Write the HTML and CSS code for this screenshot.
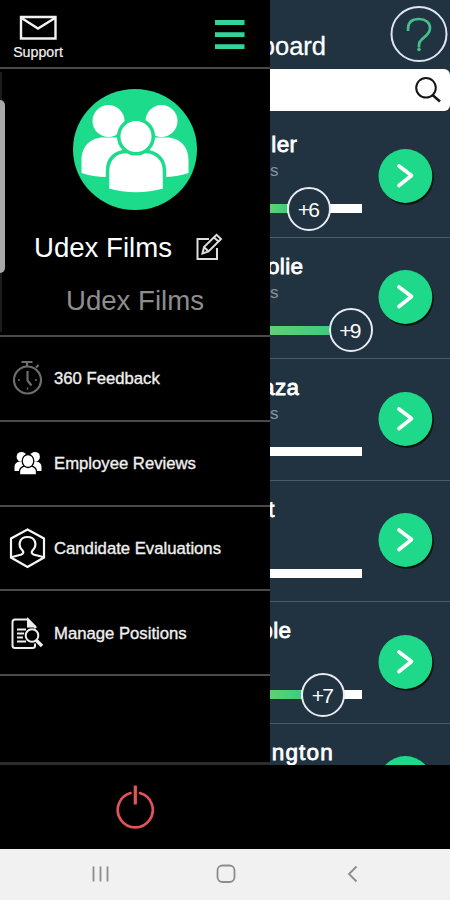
FILE: index.html
```html
<!DOCTYPE html>
<html lang="en">
<head>
<meta charset="utf-8">
<title>Udex Films</title>
<link rel="stylesheet" href="styles.css">
</head>
<body>
<svg class="defs" width="0" height="0">
  <symbol id="go" viewBox="0 0 56 56">
    <circle cx="28.8" cy="28.8" r="26.9" fill="#07120f"/>
    <circle cx="27.4" cy="27" r="26.9" fill="#1fd98b"/>
    <path d="M21 17L33.500 26.500L21 36.500" fill="none" stroke="#fff" stroke-width="3.700" stroke-linecap="round" stroke-linejoin="round"/>
  </symbol>
</svg>
<div class="screen">
  <div class="main">
    <aside class="drawer">
      <div class="top">
        <div class="support">
          <svg width="38" height="25" viewBox="0 0 38 25" fill="none" stroke="#f2f2f2" stroke-width="2.400"><path d="M2 2H36.500V23.500H2ZM2.500 3L19 13.500L36 3"/></svg>
          <span>Support</span>
        </div>
        <svg class="burger" width="30" height="30" viewBox="0 0 30 30" fill="#34d39a"><path d="M0 0H29.500V5H0ZM0 12.200H29.500V17H0ZM0 24.300H29.500V29H0Z"/></svg>
      </div>
      <div class="profile">
        <div class="thumb"></div>
        <svg class="avatar" width="124" height="121" viewBox="0 0 124 121">
          <ellipse cx="62" cy="60.500" rx="62" ry="60.500" fill="#1cdb8a"/>
          <g fill="#fff">
            <circle cx="35.500" cy="32" r="16"/><circle cx="88.500" cy="32" r="16"/>
            <path d="M8.500 84V71C8.500 57 18 48.500 30 48.500H42C54 48.500 62 58 62 70V88H34Q20 88 8.500 84ZM115.500 84V71C115.500 57 106 48.500 94 48.500H82C70 48.500 62 58 62 70V88H90Q104 88 115.500 84Z"/>
          </g>
          <g fill="#fff" stroke="#1cdb8a" stroke-width="3.500">
            <path d="M34.500 101V82C34.500 69 43 62.500 54 62.500H72C83 62.500 91.500 70 91.500 82V101Q63 109 34.500 101Z"/>
            <circle cx="63" cy="47.500" r="17.300"/>
          </g>
        </svg>
        <div class="org">Udex Films
          <svg class="edit" width="27" height="28" viewBox="0 0 27 28" fill="none" stroke="#ddd" stroke-width="2"><path d="M13 6H1.500V26H21V15"/><path d="M6.500 20.500L8 14L20.500 1.800L25 6L12.500 18.500ZM8 14L12.500 18.500M18 4.500L22.500 8.500"/></svg>
        </div>
        <div class="sub-org">Udex Films</div>
      </div>
      <div class="item">
        <svg width="34" height="40" viewBox="0 0 34 40" fill="none" stroke="#6d6d6d" stroke-width="2.200"><circle cx="17.500" cy="22" r="13.500"/><path d="M11.500 4H22.500M17 4V8.500M26 9.500L28.500 7M17.500 13V22.500L21.500 27.500"/><path d="M8 22H10M25 22H27M17.500 29.500V31.500" stroke-width="1.500"/></svg>
        <span>360 Feedback</span>
      </div>
      <div class="item">
        <svg width="34" height="40" viewBox="0 0 34 40" fill="#fff"><circle cx="11.500" cy="13.800" r="4.900"/><circle cx="25" cy="13.800" r="4.900"/><path d="M4.500 28V24Q4.500 19 10 18.500H26Q31.500 19 31.500 24V28Z"/><g stroke="#000" stroke-width="1.300"><path d="M9.500 32V28Q10 24 15 23H21Q26 24 26.500 28V32Z"/><ellipse cx="18" cy="18" rx="5.800" ry="6.500"/></g></svg>
        <span>Employee Reviews</span>
      </div>
      <div class="item">
        <svg width="38" height="42" viewBox="0 0 38 42" fill="none" stroke="#f5f5f5" stroke-width="2.200"><path d="M19.500 2.500L36 11.500V30.500L19.500 40L3 30.500V11.500Z"/><path d="M4 30L13.500 27.500Q16.500 26 14.500 23.500C9.500 18.500 11 10 19.500 10S29.500 18.500 24.500 23.500Q22.500 26 25.500 27.500L35 30"/></svg>
        <span>Candidate Evaluations</span>
      </div>
      <div class="item">
        <svg width="34" height="40" viewBox="0 0 34 40" fill="none" stroke="#eee" stroke-width="2"><path d="M25 30.500V33Q25 35 22.500 35H5Q2.500 35 2.500 32.500V9Q2.500 6.500 5 6.500H18L25 13.500V15.500"/><path d="M18 6.500V13.500H25Z" fill="#eee"/><path d="M7 16.500H16M7 20.500H14M7 24.500H13M7 28.500H16"/><circle cx="22" cy="22.500" r="6.300"/><path d="M26.500 27.500L32 33" stroke-width="3.300"/></svg>
        <span>Manage Positions</span>
      </div>
      <div class="item blank"></div>
    </aside>
    <section class="board">
      <header>
        <div class="title"><span>board</span></div>
        <svg class="help" width="58" height="58" viewBox="0 0 58 58" fill="none"><ellipse cx="29" cy="29" rx="27.500" ry="27" stroke="#dfe4f2" stroke-width="2"/><path d="M18 26V24C18 16 23.500 14 29 14C35.500 14 40 17.500 40 23C40 32.500 29 32 29 40V42.500" stroke="#43be8e" stroke-width="2.700"/><circle cx="29" cy="44.500" r="1.800" fill="#43be8e"/></svg>
      </header>
      <div class="search"><svg width="28" height="28" viewBox="0 0 28 28" fill="none" stroke="#151515" stroke-width="2"><circle cx="12" cy="10.800" r="9.800"/><path d="M18.500 18L26 24.500" stroke-width="2.500"/></svg></div>
      <div class="list">
        <div class="row"><div class="info"><b class="name e27">ler</b><i class="unit">s</i><div class="track"><div class="fill" style="width:17px"></div><span class="knob">+6</span></div></div><svg class="go"><use href="#go"/></svg></div>
        <div class="row"><div class="info"><b class="name e33">olie</b><i class="unit">s</i><div class="track full"><div class="fill" style="width:58.5px"></div><span class="knob">+9</span></div></div><svg class="go"><use href="#go"/></svg></div>
        <div class="row"><div class="info"><b class="name e29">aza</b><i class="unit">s</i><div class="track"></div></div><svg class="go"><use href="#go"/></svg></div>
        <div class="row"><div class="info"><b class="name e5">t</b><i class="unit"></i><div class="track"></div></div><svg class="go"><use href="#go"/></svg></div>
        <div class="row"><div class="info"><b class="name e21">ble</b><i class="unit"></i><div class="track"><div class="fill" style="width:31px"></div><span class="knob">+7</span></div></div><svg class="go"><use href="#go"/></svg></div>
        <div class="row"><div class="info"><b class="name e63">ngton</b></div><svg class="go"><use href="#go"/></svg></div>
      </div>
    </section>
  </div>
  <footer>
    <svg width="40" height="46" viewBox="0 0 40 46" fill="none" stroke="#e25459" stroke-width="2.600" stroke-linecap="round"><path d="M15.500 9A17.500 17.500 0 1 0 25 9"/><path d="M20.300 1.500V20.500" stroke-width="3.200" stroke-linecap="butt"/></svg>
  </footer>
  <nav>
    <svg width="17" height="18" viewBox="0 0 17 18" stroke="#8c8c8c" stroke-width="1.800"><path d="M1.500 1.500V16.500M8.500 1.500V16.500M15.500 1.500V16.500"/></svg>
    <svg width="20" height="20" viewBox="0 0 20 20" fill="none" stroke="#8c8c8c" stroke-width="1.800"><rect x="1.500" y="1.500" width="17" height="16.500" rx="5"/></svg>
    <svg width="11" height="18" viewBox="0 0 11 18" fill="none" stroke="#8c8c8c" stroke-width="1.800"><path d="M9.500 1.500L2 9L9.500 16.500"/></svg>
  </nav>
</div>
</body>
</html>
```
FILE: styles.css
```css
* { box-sizing: border-box; }
body { margin: 0; font-family: "Liberation Sans", Arial, sans-serif; color: #fff; background: #000; }
svg { display: block; flex: none; }
.defs { position: absolute; }
.screen { width: 450px; height: 900px; display: grid; grid-template-rows: 765px 84px 51px; overflow: hidden; }
.main { display: grid; grid-template-columns: 270px 180px; min-height: 0; }
.drawer { background: #000; display: flex; flex-direction: column; border-bottom: 3px solid #2c2c2c; }
.top { height: 69px; border-bottom: 2px solid #4a4a4a; display: flex; justify-content: space-between; padding: 15px 25px 0 13px; flex: none; }
.support { display: flex; flex-direction: column; align-items: center; width: 50px; font-size: 14.2px; line-height: 16px; color: #f2f2f2; -webkit-text-stroke: .2px; }
.support span { margin-top: 4px; }
.burger { margin-top: 5px; }
.profile { position: relative; height: 268px; flex: none; border-bottom: 2.500px solid #4a4a4a; padding-top: 20px; display: flex; flex-direction: column; }
.profile::before { content: ""; position: absolute; left: 0; top: 3px; width: 2px; height: 260px; background: #1d1d1d; }
.thumb { position: absolute; left: 0; top: 31px; width: 5px; height: 173px; background: #a9a9a9; border-radius: 0 5px 5px 0; }
.avatar { margin-left: 73px; }
.org { margin: 22px 0 0 34px; height: 32px; font-size: 27.600px; line-height: 32px; display: flex; align-items: center; white-space: nowrap; }
.edit { margin: -3px 0 0 24px; }
.sub-org { margin: 21px 0 0 66px; font-size: 27.600px; line-height: 32px; color: #8d8d8d; }
.item { height: 84.800px; flex: none; border-bottom: 2.500px solid #4a4a4a; display: grid; grid-template-columns: 54px 1fr; align-items: center; font-size: 16.700px; color: #f0f0f0; -webkit-text-stroke: .35px; }
.item span { padding-top: 2px; }
.item svg { justify-self: center; -webkit-text-stroke: 0; }
.item.blank { flex: 1; height: auto; border: 0; }
.board { background: #213340; overflow: hidden; display: flex; flex-direction: column; min-width: 0; }
header { height: 69px; flex: none; display: flex; justify-content: space-between; align-items: flex-start; }
.title { width: 56px; display: flex; justify-content: flex-end; padding-top: 31px; font-size: 25.500px; line-height: 30px; -webkit-text-stroke: .3px; clip-path: inset(0); }
.help { margin: 5px 2px 0 0; }
.search { height: 42px; flex: none; background: #fff; border-radius: 0 6px 6px 0; display: flex; justify-content: flex-end; padding: 8px 8px 0 0; }
.list { padding-top: 5px; }
.row { height: 121.600px; border-bottom: 1.500px solid #495c69; display: flex; align-items: flex-start; }
.info { width: 92px; flex: none; display: flex; flex-direction: column; }
.name { display: flex; justify-content: flex-end; padding-top: 16px; font-size: 22.500px; line-height: 26px; font-weight: 400; letter-spacing: .4px; -webkit-text-stroke: .8px; clip-path: inset(0); }
.e5 { width: 5px; }
.e21 { width: 21.500px; }
.e27 { width: 27.500px; }
.e29 { width: 29.500px; }
.e33 { width: 33.500px; }
.e63 { width: 64px; letter-spacing: 1.200px; }
.unit { height: 20px; margin-top: 3px; font-size: 17px; line-height: 20px; font-style: normal; color: #8793a0; }
.track { height: 9px; margin-top: 23px; background: #fff; display: flex; align-items: center; }
.track.full { width: 58.500px; }
.fill { height: 9px; flex: none; background: linear-gradient(90deg, #60d075, #3ccd7d); }
.knob { width: 44px; height: 44px; flex: none; border: 2px solid #e8ebf3; border-radius: 50%; background: #213340; display: flex; align-items: center; justify-content: center; font-size: 21px; letter-spacing: -1.700px; padding: 2px 2px 0 0; }
.go { width: 56px; height: 56px; margin: 32.500px 0 0 16px; }
footer { background: #000; padding: 19px 0 0 115px; }
nav { background: #f1f1f1; display: grid; grid-template-columns: 200px 52px 198px; align-items: center; justify-items: center; padding-bottom: 1px; }
nav svg:nth-child(3) { margin-left: 2px; }
```
